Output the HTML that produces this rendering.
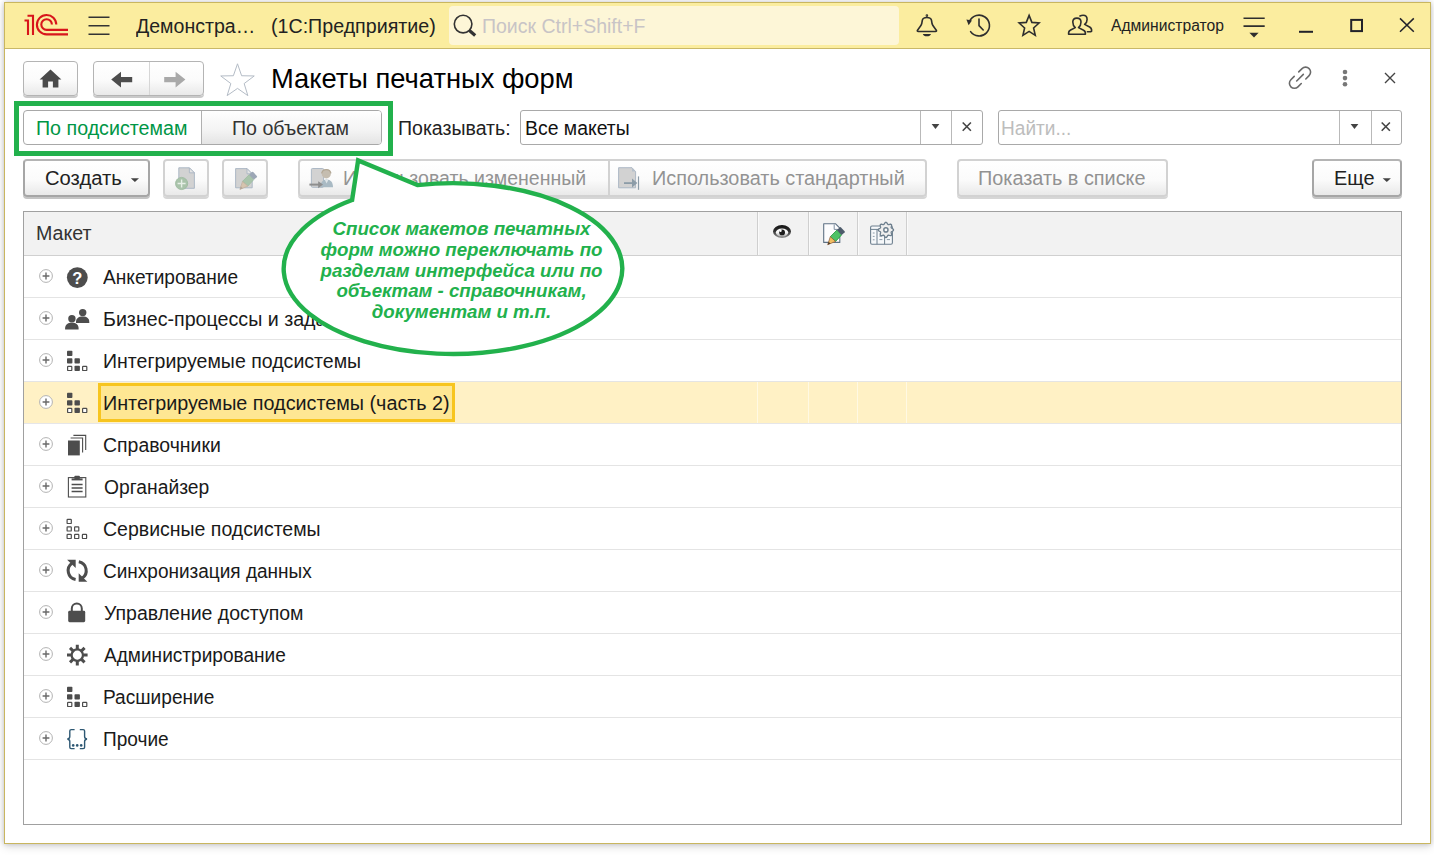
<!DOCTYPE html>
<html lang="ru">
<head>
<meta charset="utf-8">
<title>Макеты печатных форм</title>
<style>
*{box-sizing:border-box;margin:0;padding:0}
html,body{width:1434px;height:855px;overflow:hidden;background:#fff;font-family:"Liberation Sans",sans-serif;color:#1a1a1a}
.abs{position:absolute}
#shadow{position:absolute;left:0;top:0;width:1434px;height:855px;background:#fff}
#win{position:absolute;left:4px;top:2px;width:1427px;height:842px;background:#fff;border:1px solid #c9b65f;box-shadow:0 0 5px rgba(0,0,20,.2),0 3px 9px rgba(0,0,20,.12)}
#titlebar{position:absolute;left:5px;top:3px;width:1425px;height:46px;background:#fbed9f;border-bottom:1px solid #c9b868}
.t{position:absolute;white-space:nowrap;line-height:1;transform-origin:0 0}
.btn{position:absolute;border:1px solid #b4b4b4;border-radius:4px;background:linear-gradient(#ffffff 0%,#fbfbfb 55%,#e9e9e9 100%);box-shadow:0 2px 0 #c9c9c9}
.btn.dis{border:2px solid #d2d2d2;box-shadow:0 2px 0 #d6d6d6}
.inp{position:absolute;border:1px solid #a9a9a9;border-radius:3px;background:#fff}
.row{position:absolute;left:24px;width:1377px;height:42px;border-bottom:1px solid #e4e4e4}
.row .lbl{position:absolute;line-height:1;white-space:nowrap;color:#1a1a1a;transform-origin:0 0}
.row.sel{background:#fff1c5;border-bottom-color:#e6e6e8}
.row.sel .box{position:absolute;left:74px;top:1px;width:357px;height:39px;border:3px solid #f7c51f;background:#fee793}
.row svg.pl{position:absolute;left:14px;top:12px}
.row svg.ic{position:absolute;left:41px;top:9px}
</style>
</head>
<body>
<div id="shadow"></div>
<div id="win"></div>
<div id="titlebar"></div>

<!-- TITLEBAR -->
<div id="tb-items">
<svg class="abs" style="left:22px;top:12px" width="50" height="26" viewBox="0 0 50 26"><g fill="none" stroke="#d8151b" stroke-width="2.1"><path d="M2.5 8.5H6V23"/><path d="M5.5 3.8H11V23"/><path d="M34.3 12.6A9.7 9.7 0 1 0 24.6 22.4H46"/><path d="M29.9 12.6A5.3 5.3 0 1 0 24.6 17.9H46"/></g></svg>
<svg class="abs" style="left:87px;top:15px" width="24" height="22" viewBox="0 0 24 22"><g stroke="#333" stroke-width="1.5"><path d="M1.5 2.2H22.5M1.5 10.7H22.5M1.5 19.2H22.5"/></g></svg>
<div class="t" style="left:135.80px;top:16.90px;font-size:19.95px;color:#222;transform:scaleX(0.9802)">Демонстра…</div>
<div class="t" style="left:270.91px;top:16.90px;font-size:19.95px;color:#222;transform:scaleX(0.9853)">(1С:Предприятие)</div>
<div class="abs" style="left:449px;top:6px;width:450px;height:39px;background:#fdf6d7;border-radius:4px"></div>
<svg class="abs" style="left:452px;top:13.3px" width="26" height="26" viewBox="0 0 26 26"><circle cx="11.1" cy="11.1" r="8.8" fill="none" stroke="#333" stroke-width="1.6"/><path d="M17.4 17.6L23.2 22.4" stroke="#333" stroke-width="3.3" stroke-linecap="butt"/></svg>
<div class="t" style="left:481.62px;top:16.90px;font-size:19.95px;color:#c8c4c6;transform:scaleX(0.9779)">Поиск Ctrl+Shift+F</div>
<div class="t" style="left:1111.00px;top:18.00px;font-size:16.0px;color:#222;transform:scaleX(0.9780)">Администратор</div>
<svg class="abs" style="left:0;top:0" width="1434" height="50" viewBox="0 0 1434 50">
<g fill="none" stroke="#2e2e2e" stroke-width="1.6" stroke-linejoin="round" stroke-linecap="round">
<!-- bell -->
<path d="M918.3 31.5H935.5Q937 31.5 936.3 30.2L932.9 25.6C932 24 931.7 22.4 931.5 20.4C931.2 18.4 929.4 17.5 926.9 17.5C924.4 17.5 922.6 18.4 922.3 20.4C922.1 22.4 921.8 24 920.9 25.6L917.5 30.2Q916.8 31.5 918.3 31.5Z"/>
<circle cx="926.9" cy="15.6" r="0.5"/>
<!-- history -->
<path d="M969.6 21.2A10.4 10.4 0 1 1 970.6 31.6"/>
<path d="M979 19V25.6L983.2 30"/>
<!-- star -->
<polygon points="1029.10,15.40 1031.88,22.40 1039.09,23.00 1033.59,27.93 1035.27,35.30 1029.10,31.35 1022.93,35.30 1024.61,27.93 1019.11,23.00 1026.32,22.40" stroke-linejoin="miter"/>
<!-- users -->
<path d="M1068.6 34.3H1085.4C1085.6 32 1085 31 1083.6 30.3L1078.5 27.6C1080 26.4 1081 24.4 1081 22C1081 19.6 1079.4 18.1 1076.9 18.1C1074.4 18.1 1072.8 19.6 1072.8 22C1072.8 24.4 1073.8 26.4 1075.3 27.6L1070.2 30.3C1068.8 31 1068.4 32 1068.6 34.3Z"/>
<path d="M1080 16C1081 15.4 1082 15.2 1083.1 15.2C1085.6 15.2 1087.1 16.8 1087.1 19.4C1087.1 21.6 1086 23.4 1084.6 24.4L1089.6 27C1091.2 27.8 1091.8 29 1091.6 31.2C1091.2 31.7 1089 31.8 1087.4 31.7"/>
</g>
<path d="M922.8 34H931A4.2 3 0 0 1 922.8 34Z" fill="#2e2e2e"/>
<path d="M966.4 19.6L972 20.6L968.6 25.2Z" fill="#2e2e2e"/>
<!-- menu -->
<path d="M1243.5 18.3H1264.7M1243.5 26.1H1264.7" stroke="#2e2e2e" stroke-width="1.6"/>
<path d="M1249.4 32.8H1258.6L1254 37.4Z" fill="#2e2e2e"/>
<!-- min / max / close -->
<path d="M1299 31.8H1313" stroke="#22222a" stroke-width="2"/>
<rect x="1351.2" y="19.9" width="10.8" height="11.2" fill="none" stroke="#22222a" stroke-width="2"/>
<path d="M1400 18.4L1413.8 31.8M1413.8 18.4L1400 31.8" stroke="#22222a" stroke-width="1.5"/>
</svg>
</div>

<!-- HEADER ROW -->
<div id="hdr">
<div class="btn" style="left:23px;top:61px;width:55px;height:35px"></div>
<div class="btn" style="left:93px;top:61px;width:111px;height:35px"></div>
<div class="abs" style="left:149px;top:62px;width:1px;height:33px;background:#d6d6d6"></div>
<div class="t" style="left:271.22px;top:65.00px;font-size:27.6px;color:#000;transform:scaleX(0.9899)">Макеты печатных форм</div>
<svg class="abs" style="left:0;top:55px" width="1434" height="46" viewBox="0 55 1434 46">
<!-- home -->
<path d="M50.5 69.6L61.4 79.6H58.4V87.6H52.9V81.4H48.1V87.6H42.6V79.6H39.6Z" fill="#4a4a4a"/>
<!-- back -->
<path d="M111.2 79.6L121 71.8V77H132.2V82.2H121V87.4Z" fill="#4d4d4d"/>
<!-- forward -->
<path d="M185.4 79.6L175.6 71.8V77H164.2V82.2H175.6V87.4Z" fill="#a9a9a9"/>
<!-- star -->
<polygon points="237.50,63.80 241.61,75.74 254.24,75.96 244.16,83.56 247.85,95.64 237.50,88.40 227.15,95.64 230.84,83.56 220.76,75.96 233.39,75.74" fill="#fff" stroke="#b4bcc6" stroke-width="1"/>
<!-- link -->
<g transform="translate(1300 77.7) rotate(-45)" fill="none" stroke="#6a6a6a" stroke-width="1.6" stroke-linecap="round"><path d="M3.2 -5H7.9A5 5 0 0 1 7.9 5H3.2M-3.2 5H-7.9A5 5 0 0 1 -7.9 -5H-3.2M-4.7 0H4.7"/></g>
<!-- dots -->
<g fill="#777"><circle cx="1345" cy="72" r="2.3"/><circle cx="1345" cy="78.1" r="2.3"/><circle cx="1345" cy="84.2" r="2.3"/></g>
<!-- close -->
<path d="M1385 73L1395 83M1395 73L1385 83" stroke="#444" stroke-width="1.4"/>
</svg>
</div>

<!-- FILTER ROW -->
<div id="flt">
<div class="abs" style="left:23px;top:110px;width:359px;height:35px;border:1px solid #a8a8a8;border-radius:4px;background:#fff;overflow:hidden"><div class="abs" style="left:177px;top:0;width:181px;height:33px;border-left:1px solid #b0b0b0;background:linear-gradient(#fefefe,#f3f3f3 60%,#e4e4e4)"></div></div>
<div class="t" style="left:36.22px;top:117.60px;font-size:20.15px;color:#009646;transform:scaleX(0.9757)">По подсистемам</div>
<div class="t" style="left:231.83px;top:117.60px;font-size:20.15px;color:#333;transform:scaleX(0.9741)">По объектам</div>
<div class="t" style="left:397.53px;top:117.60px;font-size:20.15px;color:#222;transform:scaleX(0.9695)">Показывать:</div>
<div class="inp" style="left:520px;top:110px;width:463px;height:35px"></div>
<div class="abs" style="left:920px;top:111px;width:1px;height:33px;background:#b9b9b9"></div>
<div class="abs" style="left:951px;top:111px;width:1px;height:33px;background:#b9b9b9"></div>
<div class="t" style="left:524.84px;top:117.60px;font-size:20.15px;color:#111;transform:scaleX(0.9641)">Все макеты</div>
<div class="inp" style="left:998px;top:110px;width:404px;height:35px"></div>
<div class="abs" style="left:1339px;top:111px;width:1px;height:33px;background:#b9b9b9"></div>
<div class="abs" style="left:1371px;top:111px;width:1px;height:33px;background:#b9b9b9"></div>
<div class="t" style="left:1000.75px;top:117.60px;font-size:20.15px;color:#bdbdbd;transform:scaleX(0.9475)">Найти...</div>
<svg class="abs" style="left:0;top:105px" width="1434" height="50" viewBox="0 105 1434 50">
<path d="M931.6 124.1H939.4L935.5 128.9Z" fill="#444"/>
<path d="M962.7 122.5L970.9 130.7M970.9 122.5L962.7 130.7" stroke="#444" stroke-width="1.6"/>
<path d="M1350.6 124.1H1358.4L1354.5 128.9Z" fill="#444"/>
<path d="M1381.7 122.5L1389.9 130.7M1389.9 122.5L1381.7 130.7" stroke="#444" stroke-width="1.6"/>
</svg>
</div>

<!-- TOOLBAR -->
<div id="tbar">
<div class="btn" style="left:23px;top:159px;width:127px;height:38px;border:2px solid #a6a6a6;border-top-color:#b4b4b4;box-shadow:0 2px 0 #c4c4c4"></div>
<div class="t" style="left:44.90px;top:167.60px;font-size:20.15px;color:#222;transform:scaleX(1.0034)">Создать</div>
<div class="btn dis" style="left:163px;top:159px;width:46px;height:38px"></div>
<div class="btn dis" style="left:222px;top:159px;width:46px;height:38px"></div>
<div class="btn dis" style="left:298px;top:159px;width:629px;height:38px"></div>
<div class="abs" style="left:608px;top:161px;width:2px;height:34px;background:#d2d2d2"></div>
<div class="t" style="left:343.43px;top:167.60px;font-size:20.15px;color:#939393;transform:scaleX(0.9687)">Использовать измененный</div>
<div class="t" style="left:652.21px;top:167.60px;font-size:20.15px;color:#939393;transform:scaleX(0.9857)">Использовать стандартный</div>
<div class="btn dis" style="left:957px;top:159px;width:211px;height:38px"></div>
<div class="t" style="left:978.02px;top:167.60px;font-size:20.15px;color:#929292;transform:scaleX(0.9849)">Показать в списке</div>
<div class="btn" style="left:1312px;top:159px;width:90px;height:38px;border:2px solid #a6a6a6;border-top-color:#b4b4b4;box-shadow:0 2px 0 #c4c4c4"></div>
<div class="t" style="left:1333.71px;top:167.60px;font-size:20.15px;color:#222;transform:scaleX(0.9880)">Еще</div>
<svg class="abs" style="left:0;top:155px" width="1434" height="50" viewBox="0 155 1434 50">
<path d="M130.8 178.3H139L134.9 182.1Z" fill="#444"/>
<path d="M1382.7 178.3H1390.9L1386.8 182.1Z" fill="#444"/>
<!-- new doc -->
<path d="M178.8 167.8H189.4L194.4 172.8V188.3H178.8Z" fill="#d2d2d2" stroke="#a6b3c2" stroke-width="0.9"/>
<path d="M189.4 167.8V172.8H194.4Z" fill="#e4e4e4" stroke="#a6b3c2" stroke-width="0.8"/>
<circle cx="181.6" cy="183.5" r="6.1" fill="#a9c3aa" stroke="#9bb99d" stroke-width="0.8"/>
<path d="M177.6 183.5H185.6M181.6 179.5V187.5" stroke="#e6efe6" stroke-width="1.4"/>
<!-- edit doc -->
<path d="M235.6 168.6H247L252.2 173.8V187.8H235.6Z" fill="#d2d2d2" stroke="#a6b3c2" stroke-width="0.9"/>
<path d="M247 168.6V173.8H252.2Z" fill="#e4e4e4" stroke="#a6b3c2" stroke-width="0.8"/>
<g transform="translate(-587.8 -55.3)"><path d="M836.9 230.1L841.6 234.9L835.6 241.4L830.3 236.7Z" fill="#a9c4ab" stroke="#9cbb9f" stroke-width="0.8" stroke-linejoin="round"/>
<path d="M830.3 236.7L835.6 241.4L827.7 244.7Z" fill="#d6c4ae" stroke="#c0ae9c" stroke-width="0.7" stroke-linejoin="round"/>
<path d="M827.7 244.7L828.6 241.8L830.6 243.5Z" fill="#b0a498"/>
<path d="M836.9 230.1L839.6 227.4Q840.3 226.7 841 227.4L844.6 231.2Q845.3 232 844.6 232.6L841.6 234.9Z" fill="#9ca7b6"/></g>
<!-- use changed -->
<rect x="311.4" y="168.5" width="12.2" height="18.8" rx="1" fill="#d2d2d2" stroke="#a6b3c2" stroke-width="0.9"/>
<circle cx="326.3" cy="173.8" r="4.6" fill="#c5bdb0"/><path d="M321.6 173.4A4.8 4.8 0 0 1 331 173.4" fill="none" stroke="#b3a896" stroke-width="1.2"/>
<path d="M320.6 187.2C320.6 182.4 322.6 179.6 326.6 179.6C330.6 179.6 333 182.4 333 187.2Z" fill="#a9bac4"/>
<path d="M324.8 179.8L326.6 183.6L328.4 179.8Z" fill="#dfe6ea"/>
<path d="M309.4 184.6H319" stroke="#8e8e8e" stroke-width="2"/><path d="M318.2 181.2L323 184.6L318.2 188.2Z" fill="#8e8e8e"/>
<!-- use standard -->
<path d="M618.6 167.7H632L635.6 171.6V187.8H618.6Z" fill="#d2d2d2" stroke="#a6b3c2" stroke-width="0.9"/>
<path d="M632 167.7V171.6H635.6Z" fill="#b6c0cb"/>
<path d="M624 183.1H633" stroke="#8c9ca8" stroke-width="1.8"/><path d="M632 178.6L637.4 183.1L632 187.6Z" fill="#8c9ca8"/>
<path d="M638.5 176.4V189.8" stroke="#8c9ca8" stroke-width="1.2"/>
</svg>
</div>

<!-- TABLE -->
<div id="tbl">
<div class="abs" style="left:23px;top:211px;width:1379px;height:614px;border:1px solid #a0a0a0;background:#fff"></div>
<div class="abs" style="left:24px;top:212px;width:1377px;height:44px;background:#f2f2f2;border-bottom:1px solid #d0d0d0"></div>
<div class="t" style="left:35.82px;top:223.00px;font-size:20.15px;color:#333;transform:scaleX(0.9753)">Макет</div>
<div class="abs" style="left:757px;top:212px;width:2px;height:43px;background:#fafafa;border-left:1px solid #cfcfcf"></div>
<div class="abs" style="left:808px;top:212px;width:2px;height:43px;background:#fafafa;border-left:1px solid #cfcfcf"></div>
<div class="abs" style="left:857px;top:212px;width:2px;height:43px;background:#fafafa;border-left:1px solid #cfcfcf"></div>
<div class="abs" style="left:906px;top:212px;width:2px;height:43px;background:#fafafa;border-left:1px solid #cfcfcf"></div>
<svg class="abs" style="left:750px;top:213px" width="170" height="42" viewBox="750 213 170 42">
<!-- eye -->
<defs><linearGradient id="eg1" x1="0" y1="0" x2="0" y2="1"><stop offset="0" stop-color="#141414"/><stop offset="0.45" stop-color="#2e2e2e"/><stop offset="1" stop-color="#929292"/></linearGradient><linearGradient id="eg2" x1="0" y1="0" x2="0" y2="1"><stop offset="0" stop-color="#ffffff"/><stop offset="0.5" stop-color="#f4f4f4"/><stop offset="1" stop-color="#a8a8a8"/></linearGradient></defs>
<ellipse cx="782" cy="231.5" rx="9" ry="6.5" fill="url(#eg1)"/>
<ellipse cx="782" cy="232.6" rx="6.2" ry="4" fill="url(#eg2)"/>
<circle cx="782.1" cy="232.4" r="2.9" fill="#1c1c1c"/>
<circle cx="780.5" cy="230.8" r="1.2" fill="#fff"/>
<!-- edit -->
<path d="M823.7 223.7H835.4L839.8 228.2V242.4H823.7Z" fill="#fdfdfe" stroke="#5f7285" stroke-width="1.1" stroke-linejoin="round"/>
<path d="M834.2 224.4V229.4H838.8" fill="none" stroke="#7f90a2" stroke-width="1"/>
<path d="M836.9 230.1L841.6 234.9L835.6 241.4L830.3 236.7Z" fill="#4fc266" stroke="#1f9a3a" stroke-width="0.8" stroke-linejoin="round"/>
<path d="M830.3 236.7L835.6 241.4L827.7 244.7Z" fill="#f2bd62" stroke="#8a5a3a" stroke-width="0.7" stroke-linejoin="round"/>
<path d="M827.7 244.7L828.6 241.8L830.6 243.5Z" fill="#4a3a2a"/>
<path d="M836.9 230.1L839.6 227.4Q840.3 226.7 841 227.4L844.6 231.2Q845.3 232 844.6 232.6L841.6 234.9Z" fill="#4d5b6b"/>
<!-- table + gear -->
<rect x="870.6" y="226" width="21.8" height="18.2" rx="1.4" fill="#f6f8fa" stroke="#6d7f8e" stroke-width="1.1"/>
<path d="M870.6 229.4H892M877 229.4V244.2M884.6 229.4V244.2" stroke="#6d7f8e" stroke-width="1" fill="none"/>
<path d="M872.8 233H874.6M872.8 236.4H874.6M872.8 239.8H874.6M879.4 239.6H882.4M886.8 239.6H890M879.4 236.2H882.4" stroke="#8c9ba8" stroke-width="1"/>
<path d="M893.55 229.90L893.41 230.39L893.01 230.84L892.47 231.21L891.91 231.51L891.47 231.79L891.21 232.10L891.17 232.50L891.29 233.01L891.47 233.62L891.59 234.27L891.56 234.86L891.31 235.31L890.86 235.56L890.27 235.59L889.62 235.47L889.01 235.29L888.50 235.17L888.10 235.21L887.79 235.47L887.51 235.91L887.21 236.47L886.84 237.01L886.39 237.41L885.90 237.55L885.41 237.41L884.96 237.01L884.59 236.47L884.29 235.91L884.01 235.47L883.70 235.21L883.30 235.17L882.79 235.29L882.18 235.47L881.53 235.59L880.94 235.56L880.49 235.31L880.24 234.86L880.21 234.27L880.33 233.62L880.51 233.01L880.63 232.50L880.59 232.10L880.33 231.79L879.89 231.51L879.33 231.21L878.79 230.84L878.39 230.39L878.25 229.90L878.39 229.41L878.79 228.96L879.33 228.59L879.89 228.29L880.33 228.01L880.59 227.70L880.63 227.30L880.51 226.79L880.33 226.18L880.21 225.53L880.24 224.94L880.49 224.49L880.94 224.24L881.53 224.21L882.18 224.33L882.79 224.51L883.30 224.63L883.70 224.59L884.01 224.33L884.29 223.89L884.59 223.33L884.96 222.79L885.41 222.39L885.90 222.25L886.39 222.39L886.84 222.79L887.21 223.33L887.51 223.89L887.79 224.33L888.10 224.59L888.50 224.63L889.01 224.51L889.62 224.33L890.27 224.21L890.86 224.24L891.31 224.49L891.56 224.94L891.59 225.53L891.47 226.18L891.29 226.79L891.17 227.30L891.21 227.70L891.47 228.01L891.91 228.29L892.47 228.59L893.01 228.96L893.41 229.41Z" fill="#eeeeee" stroke="#6d7f8e" stroke-width="1.3" stroke-linejoin="round"/>
<circle cx="885.9" cy="229.9" r="2.1" fill="#fafafa" stroke="#6d7f8e" stroke-width="1.4"/>
</svg>
<div id="rows">
<div class="row" style="top:256px"><svg class="pl" width="16" height="16" viewBox="0 0 16 16"><circle cx="8" cy="8" r="6.4" fill="#fff" stroke="#b3b3b3" stroke-width="1"/><path d="M4.6 8H11.4M8 4.6V11.4" stroke="#6a6a6a" stroke-width="1.4"/></svg><svg class="ic" width="26" height="26" viewBox="0 0 26 26"><circle cx="12.3" cy="12.6" r="10.4" fill="#4d4d4d"/><text x="12.3" y="18.6" text-anchor="middle" font-family="Liberation Sans, sans-serif" font-weight="700" font-size="16.5" fill="#fff">?</text></svg><span class="lbl" style="left:79.20px;top:11.00px;font-size:20.15px;transform:scaleX(0.9497)">Анкетирование</span></div>
<div class="row" style="top:298px"><svg class="pl" width="16" height="16" viewBox="0 0 16 16"><circle cx="8" cy="8" r="6.4" fill="#fff" stroke="#b3b3b3" stroke-width="1"/><path d="M4.6 8H11.4M8 4.6V11.4" stroke="#6a6a6a" stroke-width="1.4"/></svg><svg class="ic" width="26" height="26" viewBox="0 0 26 26"><g fill="#4d4d4d"><circle cx="17.7" cy="5.6" r="3.7"/><path d="M11 15.2C11 11.4 13.4 9.6 17.7 9.6S24.3 11.4 24.3 15.2V16H11Z"/><circle cx="6.9" cy="11.7" r="3.7"/><path d="M0.1 21.6C0.1 17.6 2.6 15.8 6.9 15.8S13.6 17.6 13.6 21.6V22.5H0.1Z" stroke="#fff" stroke-width="0"/></g></svg><span class="lbl" style="left:78.82px;top:11.00px;font-size:20.15px;transform:scaleX(0.9757)">Бизнес-процессы и задачи</span></div>
<div class="row" style="top:340px"><svg class="pl" width="16" height="16" viewBox="0 0 16 16"><circle cx="8" cy="8" r="6.4" fill="#fff" stroke="#b3b3b3" stroke-width="1"/><path d="M4.6 8H11.4M8 4.6V11.4" stroke="#6a6a6a" stroke-width="1.4"/></svg><svg class="ic" width="26" height="26" viewBox="0 0 26 26"><rect x="2.0" y="1.7" width="5.4" height="5.4" rx="0.8" fill="#4d4d4d"/><rect x="2.0" y="9.2" width="5.4" height="5.4" rx="0.8" fill="#4d4d4d"/><rect x="9.5" y="9.2" width="5.4" height="5.4" rx="0.8" fill="#4d4d4d"/><rect x="2.6" y="17.3" width="4.2" height="4.2" rx="0.6" fill="#fff" stroke="#4d4d4d" stroke-width="1.2"/><rect x="9.5" y="16.7" width="5.4" height="5.4" rx="0.8" fill="#4d4d4d"/><rect x="17.6" y="17.3" width="4.2" height="4.2" rx="0.6" fill="#fff" stroke="#4d4d4d" stroke-width="1.2"/></svg><span class="lbl" style="left:78.53px;top:11.00px;font-size:20.15px;transform:scaleX(0.9702)">Интегрируемые подсистемы</span></div>
<div class="row sel" style="top:382px"><svg class="pl" width="16" height="16" viewBox="0 0 16 16"><circle cx="8" cy="8" r="6.4" fill="#fff" stroke="#b3b3b3" stroke-width="1"/><path d="M4.6 8H11.4M8 4.6V11.4" stroke="#6a6a6a" stroke-width="1.4"/></svg><svg class="ic" width="26" height="26" viewBox="0 0 26 26"><rect x="2.0" y="1.7" width="5.4" height="5.4" rx="0.8" fill="#4d4d4d"/><rect x="2.0" y="9.2" width="5.4" height="5.4" rx="0.8" fill="#4d4d4d"/><rect x="9.5" y="9.2" width="5.4" height="5.4" rx="0.8" fill="#4d4d4d"/><rect x="2.6" y="17.3" width="4.2" height="4.2" rx="0.6" fill="#fff" stroke="#4d4d4d" stroke-width="1.2"/><rect x="9.5" y="16.7" width="5.4" height="5.4" rx="0.8" fill="#4d4d4d"/><rect x="17.6" y="17.3" width="4.2" height="4.2" rx="0.6" fill="#fff" stroke="#4d4d4d" stroke-width="1.2"/></svg><div class="box"></div><span class="lbl" style="left:78.52px;top:11.00px;font-size:20.15px;transform:scaleX(0.9811)">Интегрируемые подсистемы (часть 2)</span></div>
<div class="row" style="top:424px"><svg class="pl" width="16" height="16" viewBox="0 0 16 16"><circle cx="8" cy="8" r="6.4" fill="#fff" stroke="#b3b3b3" stroke-width="1"/><path d="M4.6 8H11.4M8 4.6V11.4" stroke="#6a6a6a" stroke-width="1.4"/></svg><svg class="ic" width="26" height="26" viewBox="0 0 26 26"><rect x="3" y="7.5" width="11.8" height="14.9" fill="#4d4d4d"/><path d="M5.6 5H17.6V19.6M8.4 2.4H20.7V17" fill="none" stroke="#4d4d4d" stroke-width="1.1"/></svg><span class="lbl" style="left:79.03px;top:11.00px;font-size:20.15px;transform:scaleX(0.9652)">Справочники</span></div>
<div class="row" style="top:466px"><svg class="pl" width="16" height="16" viewBox="0 0 16 16"><circle cx="8" cy="8" r="6.4" fill="#fff" stroke="#b3b3b3" stroke-width="1"/><path d="M4.6 8H11.4M8 4.6V11.4" stroke="#6a6a6a" stroke-width="1.4"/></svg><svg class="ic" width="26" height="26" viewBox="0 0 26 26"><rect x="3.4" y="2.6" width="17.4" height="19.4" fill="#fff" stroke="#4d4d4d" stroke-width="1.1"/><rect x="9.4" y="0.8" width="5.4" height="3.4" rx="0.8" fill="#4d4d4d"/><rect x="6.6" y="3.4" width="11" height="2" fill="#4d4d4d"/><path d="M6.6 9.4H17.6M6.6 13H17.6M6.6 16.6H17.6" stroke="#4d4d4d" stroke-width="1.5"/></svg><span class="lbl" style="left:80.00px;top:11.00px;font-size:20.15px;transform:scaleX(0.9567)">Органайзер</span></div>
<div class="row" style="top:508px"><svg class="pl" width="16" height="16" viewBox="0 0 16 16"><circle cx="8" cy="8" r="6.4" fill="#fff" stroke="#b3b3b3" stroke-width="1"/><path d="M4.6 8H11.4M8 4.6V11.4" stroke="#6a6a6a" stroke-width="1.4"/></svg><svg class="ic" width="26" height="26" viewBox="0 0 26 26"><rect x="2.1" y="2.3" width="4.2" height="4.2" rx="0.6" fill="#fff" stroke="#4d4d4d" stroke-width="1.2"/><rect x="2.1" y="9.799999999999999" width="4.2" height="4.2" rx="0.6" fill="#fff" stroke="#4d4d4d" stroke-width="1.2"/><rect x="9.6" y="9.799999999999999" width="4.2" height="4.2" rx="0.6" fill="#fff" stroke="#4d4d4d" stroke-width="1.2"/><rect x="2.1" y="17.3" width="4.2" height="4.2" rx="0.6" fill="#fff" stroke="#4d4d4d" stroke-width="1.2"/><rect x="9.6" y="17.3" width="4.2" height="4.2" rx="0.6" fill="#fff" stroke="#4d4d4d" stroke-width="1.2"/><rect x="17.400000000000002" y="17.3" width="4.2" height="4.2" rx="0.6" fill="#fff" stroke="#4d4d4d" stroke-width="1.2"/></svg><span class="lbl" style="left:79.03px;top:11.00px;font-size:20.15px;transform:scaleX(0.9686)">Сервисные подсистемы</span></div>
<div class="row" style="top:550px"><svg class="pl" width="16" height="16" viewBox="0 0 16 16"><circle cx="8" cy="8" r="6.4" fill="#fff" stroke="#b3b3b3" stroke-width="1"/><path d="M4.6 8H11.4M8 4.6V11.4" stroke="#6a6a6a" stroke-width="1.4"/></svg><svg class="ic" width="26" height="26" viewBox="0 0 26 26"><g fill="none" stroke="#4d4d4d" stroke-width="3"><path d="M10.6 20.56A9 9 0 0 1 7.04 4.33"/><path d="M13.8 2.84A9 9 0 0 1 17.36 19.07"/></g><path d="M2.1 0.7H10.7V9.1Z" fill="#4d4d4d"/><path d="M22.3 22.8H13.7V14.3Z" fill="#4d4d4d"/></svg><span class="lbl" style="left:79.06px;top:11.00px;font-size:20.15px;transform:scaleX(0.9434)">Синхронизация данных</span></div>
<div class="row" style="top:592px"><svg class="pl" width="16" height="16" viewBox="0 0 16 16"><circle cx="8" cy="8" r="6.4" fill="#fff" stroke="#b3b3b3" stroke-width="1"/><path d="M4.6 8H11.4M8 4.6V11.4" stroke="#6a6a6a" stroke-width="1.4"/></svg><svg class="ic" width="26" height="26" viewBox="0 0 26 26"><path d="M6.8 10.4V7.6A5 5 0 0 1 16.8 7.6V10.4" fill="none" stroke="#4d4d4d" stroke-width="2"/><rect x="3.2" y="9.8" width="17" height="11.4" rx="1.4" fill="#4d4d4d"/></svg><span class="lbl" style="left:79.50px;top:11.00px;font-size:20.15px;transform:scaleX(0.9683)">Управление доступом</span></div>
<div class="row" style="top:634px"><svg class="pl" width="16" height="16" viewBox="0 0 16 16"><circle cx="8" cy="8" r="6.4" fill="#fff" stroke="#b3b3b3" stroke-width="1"/><path d="M4.6 8H11.4M8 4.6V11.4" stroke="#6a6a6a" stroke-width="1.4"/></svg><svg class="ic" width="26" height="26" viewBox="0 0 26 26"><path d="M18.30 12.10L22.60 12.10M16.54 16.34L19.58 19.38M12.30 18.10L12.30 22.40M8.06 16.34L5.02 19.38M6.30 12.10L2.00 12.10M8.06 7.86L5.02 4.82M12.30 6.10L12.30 1.80M16.54 7.86L19.58 4.82" stroke="#4d4d4d" stroke-width="3" fill="none"/><circle cx="12.3" cy="12.1" r="5.7" fill="none" stroke="#4d4d4d" stroke-width="2.3"/></svg><span class="lbl" style="left:79.50px;top:11.00px;font-size:20.15px;transform:scaleX(0.9466)">Администрирование</span></div>
<div class="row" style="top:676px"><svg class="pl" width="16" height="16" viewBox="0 0 16 16"><circle cx="8" cy="8" r="6.4" fill="#fff" stroke="#b3b3b3" stroke-width="1"/><path d="M4.6 8H11.4M8 4.6V11.4" stroke="#6a6a6a" stroke-width="1.4"/></svg><svg class="ic" width="26" height="26" viewBox="0 0 26 26"><rect x="2.0" y="1.7" width="5.4" height="5.4" rx="0.8" fill="#4d4d4d"/><rect x="2.0" y="9.2" width="5.4" height="5.4" rx="0.8" fill="#4d4d4d"/><rect x="9.5" y="9.2" width="5.4" height="5.4" rx="0.8" fill="#4d4d4d"/><rect x="2.6" y="17.3" width="4.2" height="4.2" rx="0.6" fill="#fff" stroke="#4d4d4d" stroke-width="1.2"/><rect x="9.5" y="16.7" width="5.4" height="5.4" rx="0.8" fill="#4d4d4d"/><rect x="17.6" y="17.3" width="4.2" height="4.2" rx="0.6" fill="#fff" stroke="#4d4d4d" stroke-width="1.2"/></svg><span class="lbl" style="left:79.05px;top:11.00px;font-size:20.15px;transform:scaleX(0.9482)">Расширение</span></div>
<div class="row" style="top:718px"><svg class="pl" width="16" height="16" viewBox="0 0 16 16"><circle cx="8" cy="8" r="6.4" fill="#fff" stroke="#b3b3b3" stroke-width="1"/><path d="M4.6 8H11.4M8 4.6V11.4" stroke="#6a6a6a" stroke-width="1.4"/></svg><svg class="ic" width="26" height="26" viewBox="0 0 26 26"><g fill="none" stroke="#2e5873" stroke-width="1.4"><path d="M9.6 2.6H6.2Q4.8 2.6 4.8 4V9.4Q4.8 11.6 2.4 12Q4.8 12.4 4.8 14.6V20.2Q4.8 21.6 6.2 21.6H9.6"/><path d="M14.8 2.6H18.2Q19.6 2.6 19.6 4V9.4Q19.6 11.6 22 12Q19.6 12.4 19.6 14.6V20.2Q19.6 21.6 18.2 21.6H14.8"/></g><g fill="#2e5873"><circle cx="8.2" cy="18.4" r="1.3"/><circle cx="12.2" cy="18.4" r="1.3"/><circle cx="16.2" cy="18.4" r="1.3"/></g></svg><span class="lbl" style="left:79.05px;top:11.00px;font-size:20.15px;transform:scaleX(0.9460)">Прочие</span></div>
</div>
<div class="abs" style="left:757px;top:382px;width:1px;height:41px;background:#fff9e3"></div>
<div class="abs" style="left:808px;top:382px;width:1px;height:41px;background:#fff9e3"></div>
<div class="abs" style="left:857px;top:382px;width:1px;height:41px;background:#fff9e3"></div>
<div class="abs" style="left:906px;top:382px;width:1px;height:41px;background:#fff9e3"></div>
</div>

<!-- CALLOUT -->
<div id="callout">
<div class="abs" style="left:14px;top:101px;width:379px;height:55px;border:5px solid #22b14c"></div>
<svg class="abs" style="left:0;top:0" width="1434" height="855" viewBox="0 0 1434 855">
<path d="M417.4 185.11A169.3 85.4 0 1 1 352.1 200.02L358.1 160.4Z" fill="#fff" stroke="#22b14c" stroke-width="4.4" stroke-linejoin="miter"/>
<g font-family="Liberation Sans, sans-serif" font-weight="700" font-style="italic" font-size="18.7" fill="#22b14c" text-anchor="middle">
<text x="461.5" y="235.2">Список макетов печатных</text>
<text x="461.5" y="255.9">форм можно переключать по</text>
<text x="461.5" y="276.5">разделам интерфейса или по</text>
<text x="461.5" y="297.1">объектам - справочникам,</text>
<text x="461.5" y="317.8">документам и т.п.</text>
</g>
</svg>
</div>
</body>
</html>
